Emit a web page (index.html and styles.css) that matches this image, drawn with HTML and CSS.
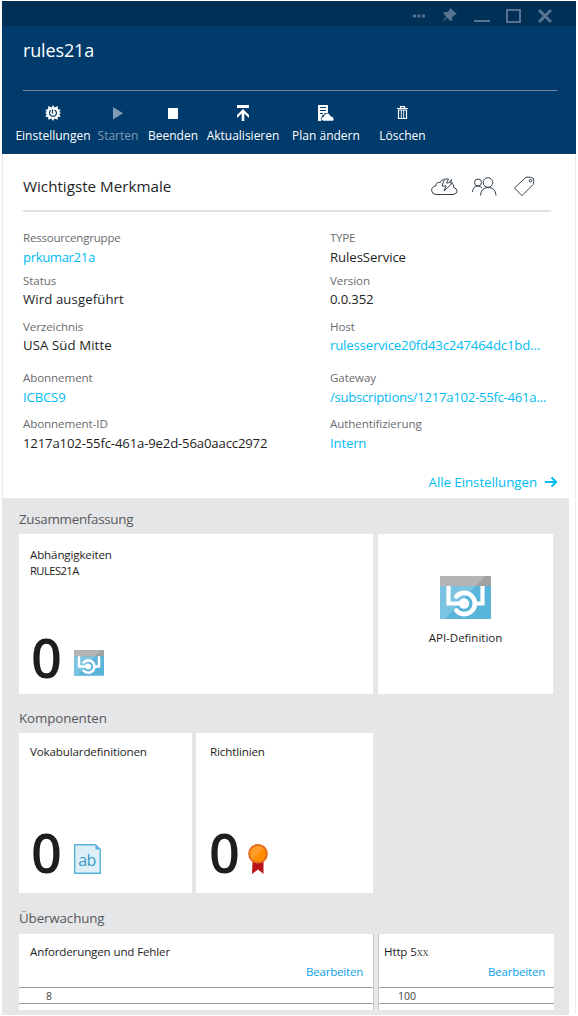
FILE: index.html
```html
<!DOCTYPE html>
<html lang="de">
<head>
<meta charset="utf-8">
<title>rules21a</title>
<link rel="stylesheet" href="styles.css">
</head>
<body>
<svg class="defs" width="0" height="0">
  <symbol id="api" viewBox="0 0 51 43">
    <rect width="51" height="43" rx="1.5" fill="#59b4d9"/>
    <path d="M0 9.500H36L5 43H1.500Q0 43 0 41.500Z" fill="#7ac3e1"/>
    <path d="M0 10V1.500Q0 0 1.500 0H49.500Q51 0 51 1.500V10Z" fill="#a0a1a2"/>
    <path d="M0 10V1.500Q0 0 1.500 0H45.500L36 10Z" fill="#b3b4b5"/>
    <path d="M8.500 10V27.500H24M42.500 10V27.500H35" fill="none" stroke="#fff" stroke-width="4.200"/>
    <path d="M16.300 20.500A10.600 10.600 0 1 1 16.300 34.500" fill="none" stroke="#fff" stroke-width="4.600" stroke-linecap="round"/>
    <circle cx="24" cy="27.500" r="5.200" fill="#fff"/>
  </symbol>
</svg>
<main class="blade">
  <header class="header">
    <div class="window-bar">
      <svg width="160" height="25" viewBox="0 0 160 25">
        <g fill="#56748f">
          <path d="M5 14.500h3v3H5zM9.500 14.500h3v3h-3zM14 14.500h3v3h-3z"/>
          <path d="M42 8l7 6-2 .7-3 2.600.2 3.400-1.700.3-3.200-3.300L34 22.500l4.200-6-3-3.300.8-1.300 3.600.2 2.200-2.600Z"/>
          <path d="M66 20h16v2H66z"/>
        </g>
        <path d="M99 10h13v12H99z" fill="none" stroke="#56748f" stroke-width="2"/>
        <path d="M131 10l12 12M143 10l-12 12" stroke="#56748f" stroke-width="3"/>
      </svg>
    </div>
    <h1 class="title">rules21a</h1>
    <nav class="toolbar">
      <a class="tool tool-settings">
        <svg width="16" height="16" viewBox="0 0 16 16"><path fill="#fff" fill-rule="evenodd" d="M8 0l1.500 2.500 3.200-1.400.2 3.200 2.800.4-1.500 2.300L16 8l-1.800 1.200 1.500 2.500-2.900.3-.1 2.800-3.100-1.200L8 16l-1.600-2.400-3.100 1.200-.1-2.800-2.900-.3 1.500-2.500L0 8l1.800-1L.3 4.700l2.800-.4.2-3.200 3.200 1.400Z"/><path d="M5.700 5.200Q4.300 6.500 4.600 8.600A3.500 3.500 0 0 0 11.400 8.600Q11.700 6 9.500 5M7.500 4.500V8.500" fill="none" stroke="#003b6b" stroke-width="1.200"/></svg>
        <span>Einstellungen</span></a>
      <a class="tool tool-start">
        <svg width="16" height="16" viewBox="0 0 16 16"><path fill="#7f9cb5" d="M3 2l10 6.300L3 14.500z"/></svg>
        <span>Starten</span></a>
      <a class="tool tool-stop">
        <svg width="16" height="16" viewBox="0 0 16 16"><path fill="#fff" d="M3 3h10v11H3z"/></svg>
        <span>Beenden</span></a>
      <a class="tool tool-update">
        <svg width="16" height="16" viewBox="0 0 16 16"><path fill="#fff" d="M2 0h12v3H2zM8 4l6 6v3L9.300 8.500V16H6.700V8.500L2 13v-3z"/></svg>
        <span>Aktualisieren</span></a>
      <a class="tool tool-plan">
        <svg width="18" height="16" viewBox="0 0 18 16"><path fill="#fff" d="M1 0h10v8H8L5 11l-1 5H1z"/><path d="M3 2.500h6M3 5.500h6M3 8.500h3" stroke="#003b6b"/><path fill="#fff" stroke="#003b6b" stroke-width=".5" d="M6.500 16Q4 15.500 4.200 13.500 4.600 11.700 6.500 11.700 7.500 8 10.500 8.300 13 8.500 13.500 11 16.500 11.500 17 14 17 15.700 15.500 16z"/></svg>
        <span>Plan ändern</span></a>
      <a class="tool tool-delete">
        <svg width="16" height="16" viewBox="0 0 16 16"><path d="M2 3.500h11M5.500 3V1.700h4V3M3.500 5h8v8.500h-8z" fill="none" stroke="#fff" stroke-width="1.200"/><path d="M6.300 5v8M8.700 5v8" stroke="#fff" stroke-width=".9"/></svg>
        <span>Löschen</span></a>
    </nav>
  </header>

  <section class="essentials">
    <div class="essentials-head">
      <h2>Wichtigste Merkmale</h2>
      <svg class="head-icons" width="108" height="24" viewBox="0 0 108 24" fill="none" stroke="#34424f" stroke-width="1">
        <path d="M9 7.500Q5.500 6.500 4.800 11 .5 11.500.6 15.500 1 19.500 5 19.500H22Q26 19 26 16.200 26 13.500 22.800 12.500 23.200 9 20.500 8M8.500 8Q10 5 12.500 4.500M11 11l2.500-7h4l-2 4h2l3-3.500-1 3.500h2L13 16l2-5z"/>
        <circle cx="47" cy="7.500" r="3.500"/><circle cx="57" cy="7.500" r="4.800"/>
        <path d="M41.500 17Q42 11 47 11 49.500 11 51 13M49.500 20.500Q50 12.500 57 12.500 64.500 12.500 65 20.500"/>
        <path d="M83.500 13L95 2.200Q99.500 1.500 102.500 3.500 103.200 6.500 102.200 9.500L91 20.700Z"/><circle cx="99.500" cy="5.800" r="1.300"/>
      </svg>
    </div>
    <dl class="props">
      <div><dt class="group">Ressourcengruppe</dt><dd class="link name">prkumar21a</dd></div>
      <div><dt class="type">TYPE</dt><dd>RulesService</dd></div>
      <div class="tight"><dt>Status</dt><dd class="wide">Wird ausgeführt</dd></div>
      <div class="tight"><dt>Version</dt><dd class="digits">0.0.352</dd></div>
      <div class="tight"><dt>Verzeichnis</dt><dd class="wide">USA Süd Mitte</dd></div>
      <div class="tight"><dt>Host</dt><dd class="link digits">rulesservice20fd43c247464dc1bd...</dd></div>
      <div><dt>Abonnement</dt><dd class="link digits">ICBCS9</dd></div>
      <div><dt>Gateway</dt><dd class="link gateway">/subscriptions/1217a102-55fc-461a...</dd></div>
      <div><dt>Abonnement-ID</dt><dd class="digits">1217a102-55fc-461a-9e2d-56a0aacc2972</dd></div>
      <div><dt>Authentifizierung</dt><dd class="link digits">Intern</dd></div>
    </dl>
    <a class="all-settings"><span>Alle Einstellungen</span>
      <svg width="13" height="12" viewBox="0 0 13 12"><path d="M0 6h11M6.500 1.500L11.200 6l-4.700 4.500" fill="none" stroke="#00bcf2" stroke-width="2"/></svg></a>
  </section>

  <div class="lower">
  <section class="parts">
    <h3 class="summary-title">Zusammenfassung</h3>
    <div class="tiles tiles-summary">
      <article class="tile">
        <h4>Abhängigkeiten</h4><p class="sub">RULES21A</p>
        <div class="metric"><span class="count">0</span><svg class="small-api" width="30" height="26"><use href="#api"/></svg></div>
      </article>
      <article class="tile tile-api">
        <svg width="51" height="43"><use href="#api"/></svg>
        <span>API-Definition</span>
      </article>
    </div>
    <h3>Komponenten</h3>
    <div class="tiles tiles-components">
      <article class="tile">
        <h4>Vokabulardefinitionen</h4>
        <div class="metric"><span class="count">0</span>
          <svg class="doc" width="27" height="30" viewBox="0 0 27 30"><path d="M.7.700H21.500L26.300 5.500V29.300H.7Z" fill="#deeff7" stroke="#59b4d9" stroke-width="1.400"/><path d="M21.500.700V5.500H26.300Z" fill="#59b4d9"/><text class="doc-text" x="4.300" y="22" textLength="18">ab</text></svg></div>
      </article>
      <article class="tile tile-rules">
        <h4>Richtlinien</h4>
        <div class="metric"><span class="count">0</span>
          <svg class="medal" width="20" height="30" viewBox="0 0 20 30"><path d="M4.500 17h11v13L10 25.500 4 30z" fill="#ba141a"/><circle cx="10" cy="9.800" r="9.800" fill="#e06a1c"/><circle cx="10" cy="9.800" r="7.900" fill="#ff8c00"/><path d="M4.500 15.500A7.900 7.900 0 0 1 15.600 4.200z" fill="#ff9d2a"/></svg></div>
      </article>
    </div>
    <h3 class="monitor-title">Überwachung</h3>
    <div class="tiles tiles-monitor">
      <article class="tile chart">
        <h4>Anforderungen und Fehler</h4><a class="edit">Bearbeiten</a>
        <div class="axis">8</div>
      </article>
      <article class="tile chart chart-http">
        <h4>Http 5<span class="xx">xx</span></h4><a class="edit">Bearbeiten</a>
        <div class="axis">100</div>
      </article>
    </div>
  </section>
  </div>
</main>
</body>
</html>
```
FILE: styles.css
```css
* { box-sizing: border-box; margin: 0; padding: 0; }
body { background: #fff; font-family: "Open Sans", "Noto Sans", sans-serif; color: #1e1e1e; }
.defs { position: absolute; }
svg { display: block; flex: none; }
h1, h2, h3, h4 { font-weight: 400; white-space: nowrap; }
.blade { width: 574px; height: 1014px; margin: 1px 0 0 2px; }

.header { height: 153px; background: #003b6b; color: #fff; }
.window-bar { height: 25px; background: #003056; display: flex; justify-content: flex-end; padding-right: 8px; }
.window-bar svg { margin-top: -1px; }
.title { margin: 0 19px 0 21px; height: 65px; padding-top: 12px; border-bottom: 1px solid #77869c; font-size: 18px; letter-spacing: -.15px; line-height: 24px; }
.toolbar { display: flex; padding: 14px 0 0 14px; font-size: 12px; }
.tool { display: flex; flex-direction: column; align-items: center; gap: 6px; line-height: 18px; white-space: nowrap; }
.tool span { margin: 0 -10px; }
.tool-settings { width: 74px; }
.tool-start { width: 40px; margin-left: 8px; color: #7f9cb5; }
.tool-stop { width: 48px; margin-left: 11px; }
.tool-update { width: 72px; margin-left: 10px; }
.tool-plan { width: 66px; margin-left: 14px; }
.tool-delete { width: 45px; margin-left: 21px; }

.essentials { height: 344px; border: solid #e9e9ea; border-width: 0 1px; padding: 0 24px 0 20px; }
.essentials-head { height: 58px; display: flex; justify-content: space-between; border-bottom: 2px solid #e1e1e1; padding-top: 20px; }
.essentials-head h2 { font-size: 15.200px; line-height: 24px; }
.head-icons { margin: 1px 12px 0 0; }
.props { display: grid; grid-template-columns: 307px 220px; grid-template-rows: 43px 46px 51px 46px 46px; padding-top: 16px; white-space: nowrap; }
.props dt { font-size: 11.600px; letter-spacing: -.1px; line-height: 19px; color: #6b6c6e; }
.props .group { letter-spacing: -.25px; }
.props .type { letter-spacing: -.3px; }
.props dd { font-size: 13.200px; letter-spacing: -.08px; line-height: 20px; }
.props .name { letter-spacing: -.4px; }
.props .wide { letter-spacing: .1px; }
.props .digits { letter-spacing: -.18px; }
.props .gateway { letter-spacing: -.3px; }
.tight dt { height: 18px; }
.link { color: #00bcf2; }
.all-settings { display: flex; justify-content: flex-end; align-items: center; gap: 8px; margin: 12px -7px 0 0; font-size: 13.300px; line-height: 20px; letter-spacing: -.05px; color: #00bcf2; }

.lower { height: 516px; border-right: 1px solid #ededee; }
.parts { width: 567px; height: 517px; background: #e5e6e8; padding-left: 17px; }
.parts h3 { height: 36px; padding-top: 11px; font-size: 13.400px; letter-spacing: -.15px; line-height: 20px; color: #58595b; }
.parts .summary-title { letter-spacing: -.3px; }
.tiles { display: grid; }
.tiles + h3 { height: 39px; padding-top: 14px; }
.tiles + .monitor-title { height: 41px; padding-top: 15px; }
.tiles-summary { grid-template-columns: 354px 175px; gap: 5px; }
.tiles-components { grid-template-columns: 173px 177px; gap: 4px; }
.tiles-monitor { grid-template-columns: 355px 176px; gap: 4px; }
.tile { height: 160px; background: #fff; padding: 13px 0 0 11px; display: flex; flex-direction: column; }
.tile h4 { font-size: 11.600px; letter-spacing: -.15px; line-height: 16px; }
.tile .sub { font-size: 11.200px; letter-spacing: -.55px; line-height: 15px; }
.tile-rules { padding-left: 14px; }
.tiles-components .tile { padding-top: 11px; }
.metric { display: flex; height: 60px; margin-top: auto; margin-bottom: 6px; }
.count { width: 44px; padding-left: 1px; margin-top: -1px; font-size: 54px; font-weight: 600; line-height: 60px; }
.small-api { margin-top: 22px; }
.doc, .medal { margin-top: 14px; }
.tiles-components .metric { margin-bottom: 3px; }
.tiles-components .count { margin-top: -8px; }
.tile-rules .count { padding-left: 0; margin-left: -1px; }
.doc-text { font-size: 16px; fill: #3999c6; }
.medal { margin-left: -5px; }
.tile-api { padding: 42px 0 0; align-items: center; gap: 11px; font-size: 11.500px; line-height: 16px; }
.chart { height: 76px; padding: 9px 0 0; border-right: 1px solid #c7c9cb; }
.chart h4 { padding-left: 11px; line-height: 18px; }
.chart-http { border-right: 0; border-left: 1px solid #c7c9cb; }
.chart-http h4 { padding-left: 5px; }
.xx { font-family: "Liberation Serif", serif; font-size: 12px; color: #555; }
.edit { align-self: flex-end; margin: 2px 10px 0 0; font-size: 11.500px; letter-spacing: -.2px; line-height: 18px; color: #0a9fe6; }
.chart-http .edit { margin-right: 9px; }
.axis { height: 17px; margin-top: 6px; border: solid #9fa0a2; border-width: 1px 0; padding-left: 27px; font-size: 10.500px; line-height: 17px; color: #444; }
.chart-http .axis { padding-left: 19px; }
```
